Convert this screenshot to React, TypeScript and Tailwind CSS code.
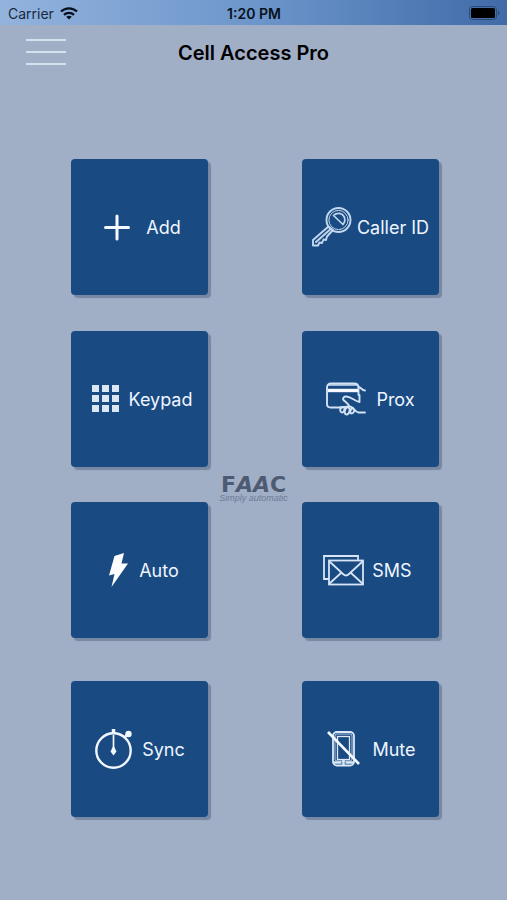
import type { ReactNode } from "react";

function KeyIcon() {
  return (
    <svg width="40" height="40" viewBox="0 0 40 40" fill="none" stroke="#c3d7ee" strokeWidth="1.9" strokeLinejoin="round" strokeLinecap="round" aria-hidden="true">
      <circle cx="26.5" cy="13" r="12" />
      <circle cx="26.5" cy="13" r="9.600" strokeWidth="1" />
      <path d="M21.500 8.500c3.500-3.500 8.500-2.500 10.500 1 1.500 3 1 5.500-1 8z" strokeWidth="1.700" />
      <path d="M16.500 19.500 1 33v5.500h5l1.500-3 2.500.5 1.500-3.500 2.500.5 1-3.500 6-6.500M17.500 23 4 35M16.500 19.500l5 4" />
    </svg>
  );
}

function PlusIcon() {
  return (
    <svg width="43" height="40" viewBox="0 0 43 40" stroke="#f4f8ff" strokeWidth="3" strokeLinecap="round" aria-hidden="true">
      <path d="M7.500 20.500h23M19 9v23" />
    </svg>
  );
}

function GridIcon() {
  const steps = [0, 10, 20];
  return (
    <svg width="37" height="40" viewBox="0 0 37 40" fill="#dce7f6" aria-hidden="true">
      {steps.map((y) => steps.map((x) => <rect key={`${x}-${y}`} x={x + 5} y={y + 6} width="7" height="7" />))}
    </svg>
  );
}

function CardIcon() {
  return (
    <svg width="45" height="40" viewBox="0 0 45 40" fill="none" stroke="#d3e2f5" strokeWidth="1.900" strokeLinejoin="round" strokeLinecap="round" aria-hidden="true">
      <path d="M14 28.500H4.500C2 28.500 1 27.500 1 25V8.500C1 6 2.500 4.500 5 4.500h23c3 0 4.500 1 4.500 4V16" />
      <path d="M2.500 6h28" strokeWidth="1.500" />
      <path d="M2 11.500h30" strokeWidth="3.400" stroke="#f6faff" strokeLinecap="butt" />
      <path d="M32.500 8c2.500 0 3 3.500 6.500 3.500M33.500 23c-4-.5-8-5-13-5.500-2.500-.3-4.500 2-3 3.500 2 2 5 3.500 5.500 6.500M33.500 16v7M14 28.500l10-1c3 0 5 5.500 8.500 6H39" />
      <path d="M17 28c-3 0-4 5-1 5.500 2 .3 4-5.500 1-5.500zM22 28c-3.500 1-4.500 7-1.500 7.500 3 0 4.500-6 1.500-7.500zM27 29c-3 1-3.500 5-1.500 5.500 2 0 4-3 1.500-5.500z" />
    </svg>
  );
}

function BoltIcon() {
  return (
    <svg width="34" height="40" viewBox="0 0 34 40" fill="#fff" aria-hidden="true">
      <path d="M14.500 6 24 3l-2.500 10.500H28L11.500 37l3-13L9 25.500z" />
    </svg>
  );
}

function MailIcon() {
  return (
    <svg className="overflow-visible" width="38" height="40" viewBox="0 0 38 40" fill="none" stroke="#d6e4f6" strokeWidth="1.800" aria-hidden="true">
      <path d="M29 10.500V6H-5v23h5" />
      <rect x="0" y="10.500" width="34" height="24" />
      <path d="m0 11 14 13q3 3 6 0L34 11M0 34l12-11M34 34 22 23" />
    </svg>
  );
}

function StopwatchIcon() {
  return (
    <svg width="43" height="40" viewBox="0 0 43 40" fill="none" stroke="#f1f6ff" strokeWidth="2.400" aria-hidden="true">
      <circle cx="19.500" cy="21.500" r="17.200" />
      <path d="M19.500 0v5" strokeWidth="3.500" />
      <path d="M19.500 6v14" strokeWidth="1.700" />
      <path d="m31 8 3-4" />
      <circle cx="34.500" cy="5" r="3.200" fill="#f1f6ff" stroke="none" />
      <path d="M19.500 16.500 22.500 22.500 19.500 26.500 16.500 22.500z" fill="#f1f6ff" stroke="none" />
    </svg>
  );
}

function PhoneOffIcon() {
  return (
    <svg width="42" height="40" viewBox="0 0 42 40" fill="none" stroke="#dce9f8" strokeWidth="1.800" aria-hidden="true">
      <rect x="8" y="3" width="21" height="33.500" rx="4" />
      <rect x="10" y="5" width="17" height="27" rx="2" strokeWidth=".8" />
      <rect x="12.500" y="7.500" width="12" height="23" strokeWidth="1.300" />
      <path d="M8.500 33.500h8M20.500 33.500h8M18.500 31v5" strokeWidth="2.500" />
      <path d="m3 3 31 32" strokeWidth="2.600" stroke="#f3f8ff" />
    </svg>
  );
}

function Tile({ label, children }: { label: string; children: ReactNode }) {
  return (
    <button type="button" className="flex h-[136px] w-[137px] items-center justify-center gap-[5px] whitespace-nowrap rounded-[4px] bg-[#194a82] text-lg text-[#eef5ff] shadow-[3px_3px_1px_#7788a3]">
      {children}
      <span className="pt-[2px]">{label}</span>
    </button>
  );
}

function Row({ children }: { children: ReactNode }) {
  return <div className="flex justify-between pl-[71px] pr-[68px]">{children}</div>;
}

export default function App() {
  return (
    <div className="flex min-h-screen flex-col bg-[#a0aec6] font-['Inter',sans-serif] text-black">
      <div className="grid h-[25px] grid-cols-3 items-center bg-linear-to-r from-[#93b3dd] via-[#6d96cb] to-[#416ba8] pl-2 pr-[7px] text-sm">
        <div className="flex items-center gap-[6px] pt-[2px] text-[#182a3d]">
          <span>Carrier</span>
          <svg width="18" height="13" viewBox="0 0 18 13" fill="none" stroke="#07111d" strokeWidth="2.300" aria-hidden="true">
            <path d="M1 4.500c4.500-4.300 11.500-4.300 16 0M4 7.800c2.800-2.600 7.200-2.600 10 0" />
            <path d="M9 12.500 6.200 9.800c1.600-1.500 4-1.500 5.600 0z" fill="#07111d" stroke="none" />
          </svg>
        </div>
        <span className="pt-[2px] text-center font-semibold text-[#07111d]">1:20 PM</span>
        <svg className="justify-self-end" width="31" height="14" viewBox="0 0 31 14" aria-hidden="true">
          <rect x=".5" y=".5" width="27" height="13" rx="3" fill="none" stroke="#2c4c76" />
          <rect x="2" y="2" width="24" height="10" rx="1.500" fill="#000" />
          <path d="M29 4.500c2 1 2 4 0 5z" fill="#2c4c76" />
        </svg>
      </div>

      <header className="grid h-[54px] grid-cols-[80px_1fr_80px] items-center">
        <button type="button" aria-label="Menu" className="ml-[26px] flex w-10 flex-col gap-[10px]">
          <span className="h-[2px] bg-[#d3e3ee]" />
          <span className="h-[2px] bg-[#d3e3ee]" />
          <span className="h-[2px] bg-[#d3e3ee]" />
        </button>
        <h1 className="pt-[2px] text-center text-xl font-semibold">Cell Access Pro</h1>
      </header>

      <main className="pb-20 pt-20">
        <Row>
          <Tile label="Add"><PlusIcon /></Tile>
          <Tile label="Caller ID"><KeyIcon /></Tile>
        </Row>
        <div className="mt-9">
          <Row>
            <Tile label="Keypad"><GridIcon /></Tile>
            <Tile label="Prox"><CardIcon /></Tile>
          </Row>
        </div>
        <div className="flex h-[35px] flex-col items-center justify-end text-[#4d5b72]">
          <span className="font-['DejaVu_Sans',sans-serif] text-[22px] font-bold leading-[18px]">F<i>AA</i>C</span>
          <span className="font-['Liberation_Sans',sans-serif] text-[9px] italic leading-[8px] text-[#6d7b92]">Simply automatic</span>
        </div>
        <Row>
          <Tile label="Auto"><BoltIcon /></Tile>
          <Tile label="SMS"><MailIcon /></Tile>
        </Row>
        <div className="mt-[43px]">
          <Row>
            <Tile label="Sync"><StopwatchIcon /></Tile>
            <Tile label="Mute"><PhoneOffIcon /></Tile>
          </Row>
        </div>
      </main>
    </div>
  );
}
